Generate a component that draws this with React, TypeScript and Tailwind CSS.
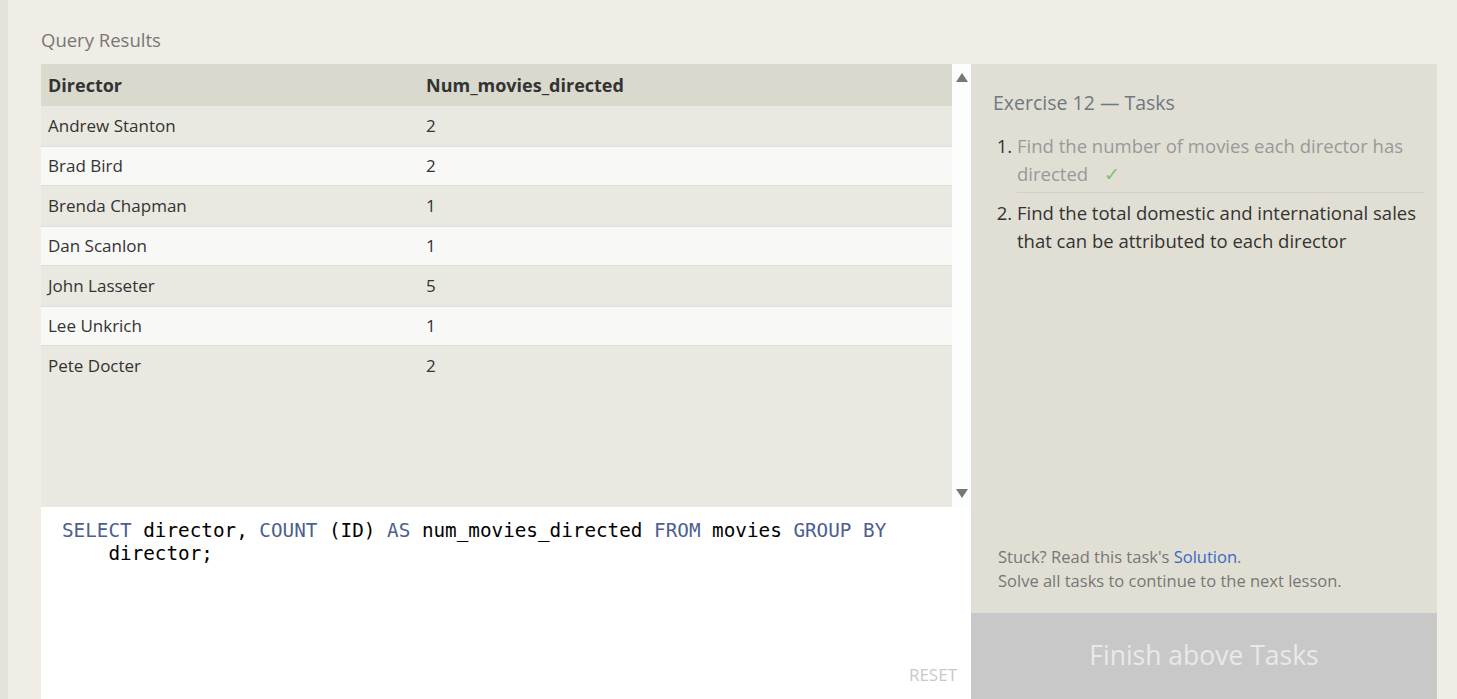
import React from "react";

const rows: [string, number][] = [
  ["Andrew Stanton", 2],
  ["Brad Bird", 2],
  ["Brenda Chapman", 1],
  ["Dan Scanlon", 1],
  ["John Lasseter", 5],
  ["Lee Unkrich", 1],
  ["Pete Docter", 2],
];

const sans = { fontFamily: '"Open Sans", "Noto Sans", sans-serif' };

function Keyword({ children }: { children: React.ReactNode }) {
  return <span className="text-[#4c5f8f]">{children}</span>;
}

export default function App() {
  return (
    <div className="flex h-[699px] overflow-hidden bg-[#f0ede6]" style={sans}>
      <div className="w-[8px] shrink-0 bg-[#e4e1dd]" />
      <div className="flex min-w-0 flex-1 flex-col pl-[33px] pr-[20px]">
        <div className="h-[64px] pt-[27px] text-[18.5px] leading-[26px] text-[#777]">Query Results</div>
        <div className="flex flex-1">
          {/* results + editor */}
          <div className="flex w-[930px] shrink-0 flex-col">
            <div className="flex h-[443px]">
              <div className="flex flex-1 flex-col bg-[#e9e8e1]">
                <div className="flex h-[42px] items-center bg-[#d9d9cd] text-[18px] font-bold text-[#333]">
                  <div className="w-[385px] pl-[7px]">Director</div>
                  <div>Num_movies_directed</div>
                </div>
                {rows.map(([name, n], i) => (
                  <div
                    key={name}
                    className={
                      i % 2 === 0
                        ? "flex h-[40px] items-center bg-[#e9e8e1] text-[17px] text-[#333]"
                        : "flex h-[40px] items-center border-y border-[#dfdfd8] bg-[#f8f8f7] text-[17px] text-[#333]"
                    }
                  >
                    <div className="w-[385px] pl-[7px]">{name}</div>
                    <div>{n}</div>
                  </div>
                ))}
              </div>
              <div className="flex w-[19px] flex-col items-center justify-between bg-[#fdfdfd] py-[9px]">
                <svg width="12" height="9" viewBox="0 0 12 9">
                  <path d="M6 0 L12 9 L0 9 Z" fill="#777" />
                </svg>
                <svg width="12" height="9" viewBox="0 0 12 9">
                  <path d="M0 0 L12 0 L6 9 Z" fill="#777" />
                </svg>
              </div>
            </div>
            <div className="relative flex-1 bg-white px-[21px] pt-[12px]">
              <pre
                className="whitespace-pre-wrap text-[19.3px] leading-[23px] text-black"
                style={{ fontFamily: '"DejaVu Sans Mono", "Liberation Mono", monospace' }}
              >
                <Keyword>SELECT</Keyword> director, <Keyword>COUNT</Keyword> (ID) <Keyword>AS</Keyword> num_movies_directed{" "}
                <Keyword>FROM</Keyword> movies <Keyword>GROUP BY</Keyword>
                {"\n    director;"}
              </pre>
              <div className="absolute bottom-[12px] right-[14px] text-[17px] text-[#c8c8c8]">RESET</div>
            </div>
          </div>
          {/* tasks panel */}
          <div className="flex min-w-0 flex-1 flex-col bg-[#e1dfd4]">
            <div className="flex-1 pl-[22px] pr-[12px] pt-[26px]">
              <div className="text-[19.5px] leading-[26px] text-[#6f7882]">Exercise 12 — Tasks</div>
              <ol className="mt-[16px] list-decimal pl-[24px] text-[18.5px] leading-[28px] marker:text-[#333]">
                <li className="border-b border-[#d2d0c6] pb-[4px] text-[#999]">
                  Find the number of movies each director has directed
                  <span className="ml-[16px] text-[#7cc47c]">✓</span>
                </li>
                <li className="pt-[6px] text-[#333]">
                  Find the total domestic and international sales that can be attributed to each director
                </li>
              </ol>
            </div>
            <div className="pb-[20px] pl-[27px] text-[16.5px] leading-[24px] text-[#777]">
              <div>
                Stuck? Read this task's <span className="text-[#3b68c6]">Solution</span>.
              </div>
              <div>Solve all tasks to continue to the next lesson.</div>
            </div>
            <div className="flex h-[86px] shrink-0 items-center justify-center bg-[#c8c8c8] text-[26.5px] text-[#e9e9e9]">
              Finish above Tasks
            </div>
          </div>
        </div>
      </div>
    </div>
  );
}
